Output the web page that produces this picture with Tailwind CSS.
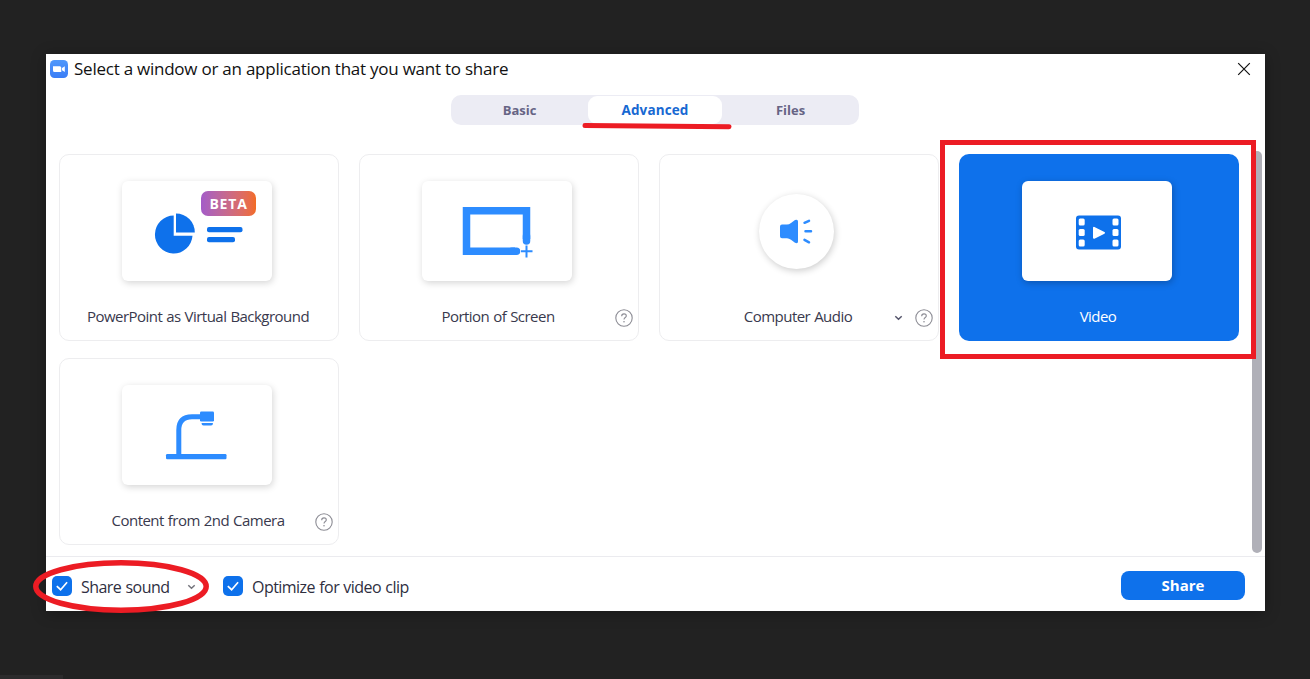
<!DOCTYPE html>
<html lang="en">
<head>
<meta charset="utf-8">
<title>Share selection</title>
<script src="https://cdn.jsdelivr.net/npm/@tailwindcss/browser@4"></script>
</head>
<body class="relative h-[679px] w-[1310px] overflow-hidden bg-[#222222] pl-[46px] pt-[54px] font-['Open_Sans','Noto_Sans',sans-serif]">
<svg width="0" height="0" class="absolute">
  <defs>
    <symbol id="help" viewBox="0 0 18 18"><circle cx="9" cy="9" r="8.200" fill="none" stroke="#8c8c94" stroke-width="1.100"/><path d="M6.700 7.200c0-1.500 1-2.300 2.300-2.300s2.300.8 2.300 2c0 1.600-2.300 1.700-2.300 3.500" fill="none" stroke="#8c8c94" stroke-width="1.100"/><circle cx="9" cy="12.800" r=".8" fill="#8c8c94"/></symbol>
    <symbol id="chev" viewBox="0 0 8 6"><path d="M.8 1.300 4 4.300l3.200-3" fill="none" stroke="currentColor" stroke-width="1.500"/></symbol>
    <symbol id="check" viewBox="0 0 20 20"><path d="M4.800 10.100l3.800 3.600 6.500-7.400" fill="none" stroke="#fff" stroke-width="1.700"/></symbol>
  </defs>
</svg>
<main class="flex h-[557px] w-[1219px] flex-col bg-white shadow-[0_2px_14px_rgba(0,0,0,0.3)]">
  <header class="flex h-[30px] items-center pl-1 pr-[14px]">
    <svg class="h-[18px] w-[18px]" viewBox="0 0 18 18"><defs><linearGradient id="zg" x2="0" y2="1"><stop stop-color="#4f97fb"/><stop offset="1" stop-color="#3a7df6"/></linearGradient></defs><rect width="18" height="18" rx="4.500" fill="url(#zg)"/><path d="M3 6.200h6.800q1.500 0 1.500 1.500V12H4.500Q3 12 3 10.500zM12 8l2.800-1.800V12L12 10.300z" fill="#fff"/></svg>
    <h1 class="ml-[6px] whitespace-nowrap text-[17px] leading-[30px] tracking-[-0.24px] text-[#111]">Select a window or an application that you want to share</h1>
    <svg class="ml-auto h-[14px] w-[14px]" viewBox="0 0 14 14"><path d="M1.200 1.200 12.800 12.800M12.800 1.200 1.200 12.800" stroke="#111" stroke-width="1.200"/></svg>
  </header>
  <nav class="relative ml-[405px] mt-[11px] flex h-[30px] w-[408px] rounded-[10px] bg-[#ececf4] text-[13px] font-bold leading-[30px]">
    <span class="w-[137px] text-center text-[#666484]">Basic</span>
    <span class="my-px w-[134px] rounded-[9px] bg-white text-center text-[13.5px] leading-[28px] tracking-[0.13px] text-[#1768d2]">Advanced</span>
    <span class="w-[137px] text-center text-[#666484]">Files</span>
    <svg class="absolute left-[130px] top-[27px] h-[8px] w-[152px]" viewBox="0 0 152 8"><path d="M4 3.500 148 4.700" stroke="#ec1c24" stroke-width="5" stroke-linecap="round"/></svg>
  </nav>
  <section class="relative mt-[29px] flex h-[402px] pl-[13px]">
    <div class="grid h-[391px] grid-cols-[280px_280px_280px_280px] grid-rows-[187px_187px] gap-x-5 gap-y-[17px] text-[15px] leading-[20px] tracking-[-0.53px] [word-spacing:0.6px] text-[#39394d]">
      <article class="relative flex flex-col items-center rounded-[10px] border border-[#ededef] pr-[2px] pt-[26px]">
        <div class="relative mr-[2px] h-[100px] w-[150px] rounded-[6px] bg-white shadow-[1px_2px_7px_rgba(0,0,0,0.17)]">
          <svg class="h-[100px] w-[150px]" viewBox="0 0 150 100" fill="#0e71eb"><path d="M51.700 34.500v20.200h18.800A18.800 19 0 1 1 51.700 34.500z"/><path d="M54 32.500A18.800 18.800 0 0 1 72.800 51.500H54z"/><rect x="85" y="46" width="35.500" height="5.200" rx="2"/><rect x="85" y="56" width="28" height="5.200" rx="2"/></svg>
          <b class="absolute left-[79px] top-[10px] h-[25px] w-[55px] rounded-[7px] bg-linear-to-r from-[#a45bc8] to-[#f26b21] text-center text-[14px] leading-[25px] tracking-[0.8px] text-white">BETA</b>
        </div>
        <p class="mt-[25px] whitespace-nowrap">PowerPoint as Virtual Background</p>
      </article>
      <article class="relative flex flex-col items-center rounded-[10px] border border-[#ededef] pr-[2px] pt-[26px]">
        <div class="mr-[2px] h-[100px] w-[150px] rounded-[6px] bg-white shadow-[1px_2px_7px_rgba(0,0,0,0.17)]">
          <svg class="h-[100px] w-[150px]" viewBox="0 0 150 100" fill="none" stroke="#2d8cff"><path d="M104.500 58V29.800H44.500V70.300H93" stroke-width="7.500"/><path d="M104.500 55v5M90 70.300h4.500" stroke-width="7.500" stroke-linecap="round"/><path d="M99 70.300h11.500M104.500 64.500v12" stroke-width="2"/></svg>
        </div>
        <p class="mt-[25px] whitespace-nowrap">Portion of Screen</p>
        <svg class="absolute bottom-[13px] right-[5px] h-[18px] w-[18px]"><use href="#help"/></svg>
      </article>
      <article class="relative flex flex-col items-center rounded-[10px] border border-[#ededef] pr-[2px] pt-[39px]">
        <div class="mr-[3px] h-[75px] w-[75px] rounded-full bg-white shadow-[1px_2px_7px_rgba(0,0,0,0.2)]">
          <svg class="h-[75px] w-[75px]" viewBox="0 0 75 75"><path d="M21 32.500q0-2 2-2h5q2 0 4-1.500l4-3q3-1.200 3 1.500v20q0 2.500-3 1.200l-4-3q-2-1.500-4-1.500h-5q-2 0-2-2z" fill="#2d8cff"/><path d="M45.500 28.800l4.500-2M46.500 37.200h5.500M45.500 45.800l4.500 2.500" stroke="#2d8cff" stroke-width="2.500" stroke-linecap="round"/></svg>
        </div>
        <p class="mt-[37px] whitespace-nowrap">Computer Audio</p>
        <svg class="absolute bottom-[19px] right-[35px] h-[6px] w-[9px] text-[#55556b]"><use href="#chev"/></svg>
        <svg class="absolute bottom-[13px] right-[5px] h-[18px] w-[18px]"><use href="#help"/></svg>
      </article>
      <article class="relative flex flex-col items-center rounded-[10px] bg-[#0e71eb] pr-[2px] pt-[27px] text-white">
        <div class="mr-[2px] h-[100px] w-[150px] rounded-[6px] bg-white shadow-[1px_2px_7px_rgba(0,0,0,0.25)]">
          <svg class="h-[100px] w-[150px]" viewBox="0 0 150 100"><rect x="54" y="34.500" width="45" height="34" rx="3" fill="#0e71eb"/><g fill="#fff"><rect x="56.700" y="37.500" width="6" height="7" rx="1.500"/><rect x="56.700" y="48" width="6" height="7" rx="1.500"/><rect x="56.700" y="58.500" width="6" height="7" rx="1.500"/><rect x="90.500" y="37.500" width="6" height="7" rx="1.500"/><rect x="90.500" y="48" width="6" height="7" rx="1.500"/><rect x="90.500" y="58.500" width="6" height="7" rx="1.500"/><path d="M72 46.800v10l10-5z" stroke="#fff" stroke-width="2" stroke-linejoin="round"/></g></svg>
        </div>
        <p class="mt-[25px] whitespace-nowrap">Video</p>
      </article>
      <article class="relative flex flex-col items-center rounded-[10px] border border-[#ededef] pr-[2px] pt-[26px]">
        <div class="mr-[2px] h-[100px] w-[150px] rounded-[6px] bg-white shadow-[1px_2px_7px_rgba(0,0,0,0.17)]">
          <svg class="h-[100px] w-[150px]" viewBox="0 0 150 100" fill="#2d8cff"><path d="M56.800 71V45Q56.800 31.700 70 31.700h10" fill="none" stroke="#2d8cff" stroke-width="5"/><rect x="78" y="26.500" width="14" height="10" rx="1.200"/><path d="M79.500 38h11.500q0 2.500-2 2.500h-7.500q-2 0-2-2.500z"/><rect x="44" y="69" width="60.500" height="5.300" rx="1.200"/></svg>
        </div>
        <p class="mt-[25px] whitespace-nowrap">Content from 2nd Camera</p>
        <svg class="absolute bottom-[13px] right-[5px] h-[18px] w-[18px]"><use href="#help"/></svg>
      </article>
    </div>
    <div class="absolute right-[3px] top-[-3px] h-[402px] w-[10px] rounded-[5px] bg-[#b0b0b8]"></div>
    <div class="absolute left-[894px] top-[-14px] h-[219px] w-[316px] border-[5px] border-[#ec1c24]"></div>
  </section>
  <footer class="relative flex h-[55px] items-center border-t border-[#ebebef] pb-1 pl-[6px] pr-5 pt-[8px] text-[16px] tracking-[-0.54px] [word-spacing:0.6px] text-[#2f2f3f]">
    <svg class="h-5 w-5 rounded-[5px] bg-[#0e71eb]"><use href="#check"/></svg>
    <span class="ml-[9px] w-[106px] whitespace-nowrap pt-px">Share sound</span>
    <svg class="mt-[2px] h-[6px] w-[9px] text-[#74747c]"><use href="#chev"/></svg>
    <svg class="ml-[27px] h-5 w-5 rounded-[5px] bg-[#0e71eb]"><use href="#check"/></svg>
    <span class="ml-[9px] whitespace-nowrap pt-px">Optimize for video clip</span>
    <button class="mb-[2px] ml-auto h-[29px] w-[124px] rounded-[8px] bg-[#0e71eb] text-[15px] font-bold leading-[29px] tracking-normal text-white">Share</button>
    <svg class="absolute left-[-14px] top-[2px] h-[56px] w-[178px]" viewBox="0 0 178 56"><ellipse cx="89" cy="27.500" rx="85.200" ry="23.700" fill="none" stroke="#ec1c24" stroke-width="5.500"/></svg>
  </footer>
</main>
<div class="absolute bottom-0 left-0 h-[4px] w-[63px] bg-[#2c2b2c]"></div>
</body>
</html>
